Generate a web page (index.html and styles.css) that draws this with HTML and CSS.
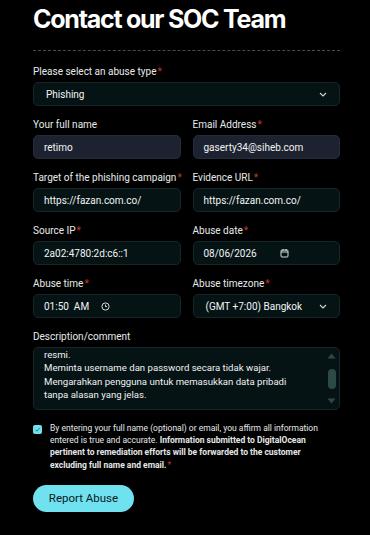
FILE: index.html
```html
<!DOCTYPE html>
<html>
<head>
<meta charset="utf-8">
<link rel="stylesheet" href="styles.css">
</head>
<body>
<main class="page">
  <h1 class="title">Contact our SOC Team</h1>
  <hr class="divider">
  <form class="form">
    <div class="field">
      <label class="label">Please select an abuse type<span class="req">*</span></label>
      <div class="input dark select"><span>Phishing</span>
        <svg class="chev" width="8" height="5" viewBox="0 0 8 5"><path d="M1 1l3 3 3-3" fill="none" stroke="#cfd6d6" stroke-width="1.1"/></svg>
      </div>
    </div>
    <div class="grid">
      <div class="field">
        <label class="label">Your full name</label>
        <div class="input filled">retimo</div>
      </div>
      <div class="field">
        <label class="label">Email Address<span class="req">*</span></label>
        <div class="input filled">gaserty34@siheb.com</div>
      </div>
      <div class="field">
        <label class="label">Target of the phishing campaign<span class="req">*</span></label>
        <div class="input dark">https://fazan.com.co/</div>
      </div>
      <div class="field">
        <label class="label">Evidence URL<span class="req">*</span></label>
        <div class="input dark">https://fazan.com.co/</div>
      </div>
      <div class="field">
        <label class="label">Source IP<span class="req">*</span></label>
        <div class="input dark">2a02:4780:2d:c6::1</div>
      </div>
      <div class="field">
        <label class="label">Abuse date<span class="req">*</span></label>
        <div class="input dark date"><span>08/06/2026</span>
          <svg class="cal" width="9" height="10" viewBox="0 0 9 10"><rect x="1" y="2" width="7" height="7" rx="1" fill="none" stroke="#d6dcdc" stroke-width="1"/><path d="M1 4h7M3 1v2M6 1v2" stroke="#d6dcdc" stroke-width="1"/></svg>
        </div>
      </div>
      <div class="field">
        <label class="label">Abuse time<span class="req">*</span></label>
        <div class="input dark time"><span>01:50&nbsp; AM</span>
          <svg class="clock" width="9" height="9" viewBox="0 0 9 9"><circle cx="4.5" cy="4.5" r="3.6" fill="none" stroke="#d6dcdc" stroke-width="1"/><path d="M4.5 2.6v2h1.5" fill="none" stroke="#d6dcdc" stroke-width="1"/></svg>
        </div>
      </div>
      <div class="field">
        <label class="label">Abuse timezone<span class="req">*</span></label>
        <div class="input dark select"><span>(GMT +7:00) Bangkok</span>
          <svg class="chev" width="8" height="5" viewBox="0 0 8 5"><path d="M1 1l3 3 3-3" fill="none" stroke="#cfd6d6" stroke-width="1.1"/></svg>
        </div>
      </div>
    </div>
    <div class="field">
      <label class="label">Description/comment</label>
      <div class="textarea">
        <div class="ta-text">resmi.<br>Meminta username dan password secara tidak wajar.<br>Mengarahkan pengguna untuk memasukkan data pribadi<br>tanpa alasan yang jelas.</div>
        <div class="scrollbar">
          <svg width="9" height="6" viewBox="0 0 9 6"><path d="M4.5 0.5L8.5 5.5H0.5Z" fill="#2c4a48"/></svg>
          <div class="thumb"></div>
          <svg width="9" height="6" viewBox="0 0 9 6"><path d="M0.5 0.5H8.5L4.5 5.5Z" fill="#2c4a48"/></svg>
        </div>
      </div>
    </div>
    <div class="consent">
      <span class="checkbox"><svg width="9" height="9" viewBox="0 0 9 9"><path d="M2.3 4.7l1.5 1.5 3-3.3" fill="none" stroke="#2a7c86" stroke-width="1"/></svg></span>
      <p class="consent-text">By entering your full name (optional) or email, you affirm all information entered is true and accurate. <b>Information submitted to DigitalOcean pertinent to remediation efforts will be forwarded to the customer excluding full name and email.</b><span class="req">*</span></p>
    </div>
    <button type="button" class="btn">Report Abuse</button>
  </form>
</main>
</body>
</html>
```

FILE: styles.css
```css
* { box-sizing: border-box; }
html, body { margin: 0; padding: 0; background: #000; }
body {
  color: #e8ecec;
  font-family: Roboto, "Noto Sans", sans-serif;
  width: 370px;
  height: 535px;
  overflow: hidden;
}
.page {
  padding: 2px 30px 0 33px;
}
.title {
  margin: 0;
  font-family: Inter, sans-serif;
  font-weight: 700;
  font-size: 25px;
  line-height: 34px;
  letter-spacing: -1.25px;
  color: #fff;
}
.divider {
  margin: 14px 0 0;
  border: 0;
  border-top: 1px dashed #4a4a4a;
  height: 0;
}
.form {
  display: flex;
  flex-direction: column;
  gap: 12px;
  margin-top: 14px;
}
.grid {
  display: grid;
  grid-template-columns: minmax(0, 1fr) minmax(0, 1fr);
  column-gap: 12px;
  row-gap: 12px;
}
.field {
  display: flex;
  flex-direction: column;
  gap: 3px;
  min-width: 0;
}
.label {
  font-size: 10px;
  line-height: 14px;
  color: #e6eaea;
  white-space: nowrap;
}
.req { color: #c0392b; margin-left: 1px; }
.input {
  height: 24px;
  border-radius: 5px;
  border: 1px solid #162628;
  display: flex;
  align-items: center;
  padding: 0 10px;
  font-size: 10px;
  color: #f2f4f4;
  white-space: nowrap;
  overflow: hidden;
}
.dark { background: #061315; }
.filled { background: #1d2230; border-color: #262c3a; }
.select { justify-content: space-between; padding-left: 12px; padding-right: 12px; }
.date .cal { margin-left: 23px; }
.time .clock { margin-left: 12px; }
.textarea {
  height: 63px;
  border-radius: 5px;
  border: 1px solid #162628;
  background: #061315;
  position: relative;
  overflow: hidden;
}
.ta-text {
  padding: 0 20px 0 10px;
  font-size: 9.6px;
  line-height: 13.4px;
  color: #f0f2f2;
  white-space: nowrap;
}
.scrollbar {
  position: absolute;
  top: 5px;
  right: 3px;
  bottom: 5px;
  width: 9px;
  display: flex;
  flex-direction: column;
  align-items: center;
  justify-content: space-between;
}
.thumb {
  width: 8px;
  height: 20px;
  border-radius: 4px;
  background: #2c4a48;
  margin-top: 6px;
  margin-bottom: 5px;
}
.consent {
  display: flex;
  gap: 8px;
}
.checkbox {
  flex: none;
  width: 9px;
  height: 9px;
  border-radius: 2px;
  background: #6fe0ee;
  margin-top: 3px;
  display: flex;
}
.consent-text {
  margin: 0;
  max-width: 272px;
  font-family: Roboto, sans-serif;
  font-size: 8.5px;
  line-height: 12.2px;
  color: #e4e8e8;
}
.consent-text b { font-weight: 700; }
.btn {
  align-self: flex-start;
  margin-top: 2px;
  width: 101px;
  height: 27px;
  border: 0;
  border-radius: 14px;
  background: #6fe1ef;
  color: #0a1a1e;
  font-family: Roboto, sans-serif;
  font-size: 11.5px;
  padding: 0;
}
```
